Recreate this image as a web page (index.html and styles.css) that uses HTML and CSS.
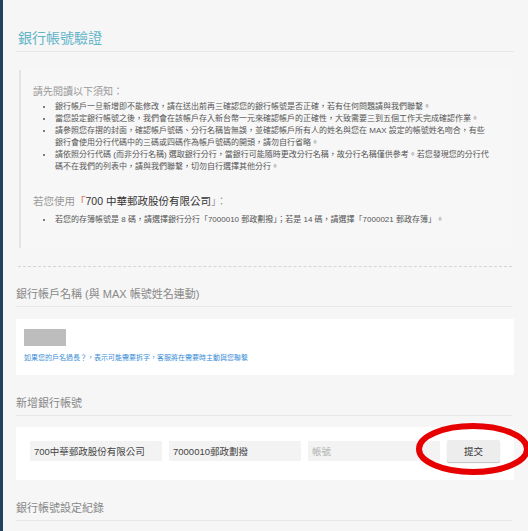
FILE: index.html
```html
<!DOCTYPE html>
<html lang="zh-Hant">
<head>
  <meta charset="UTF-8">
  <meta name="viewport" content="width=device-width, initial-scale=1.0">
  <title>銀行帳號驗證</title>
  <link rel="stylesheet" href="styles.css">
</head>
<body>
  <div class="page">
    <h1 class="page-title">銀行帳號驗證</h1>

    <div class="notice">
      <p class="notice-head">請先閱讀以下須知：</p>
      <ul class="notice-list">
        <li>銀行帳戶一旦新增即不能修改，請在送出前再三確認您的銀行帳號是否正確，若有任何問題請與我們聯繫。</li>
        <li>當您設定銀行帳號之後，我們會在該帳戶存入新台幣一元來確認帳戶的正確性，大致需要三到五個工作天完成確認作業。</li>
        <li>請參照您存摺的封面，確認帳戶號碼、分行名稱皆無誤，並確認帳戶所有人的姓名與您在 MAX 設定的帳號姓名吻合，有些<br>銀行會使用分行代碼中的三碼或四碼作為帳戶號碼的開頭，請勿自行省略。</li>
        <li>請依照分行代碼 (而非分行名稱) 選取銀行分行，當銀行可能隨時更改分行名稱，故分行名稱僅供參考。若您發現您的分行代<br>碼不在我們的列表中，請與我們聯繫，切勿自行選擇其他分行。</li>
      </ul>
      <p class="post-head">若您使用<span class="bracket">「</span><strong>700 中華郵政股份有限公司</strong>」：</p>
      <ul class="notice-list">
        <li>若您的存簿帳號是 8 碼，請選擇銀行分行「7000010 郵政劃撥」；若是 14 碼，請選擇「7000021 郵政存簿」。</li>
      </ul>
    </div>

    <hr class="dashed">

    <h2 class="section-title first">銀行帳戶名稱 (與 MAX 帳號姓名連動)</h2>
    <div class="card name-card">
      <div class="name-box"></div>
      <a class="name-link" href="#">如果您的戶名過長？，表示可能需要拆字，客服將在需要時主動與您聯繫</a>
    </div>

    <h2 class="section-title">新增銀行帳號</h2>
    <div class="card add-card">
      <input class="field" type="text" value="700中華郵政股份有限公司">
      <input class="field" type="text" value="7000010郵政劃撥">
      <input class="field" type="text" placeholder="帳號">
      <button class="submit-btn">提交</button>
    </div>

    <h2 class="section-title">銀行帳號設定紀錄</h2>
  </div>

  <!-- red circle marking the submit button -->
  <svg class="mark" width="116" height="56" viewBox="0 0 116 56">
    <ellipse cx="58" cy="28" rx="54" ry="23" fill="none" stroke="#e60000" stroke-width="6"/>
  </svg>
</body>
</html>
```

FILE: styles.css
```css
body {
  margin: 0;
  background-color: #f6f6f6;
  border-left: 3px solid #24415f;
  min-height: 531px;
  box-sizing: border-box;
  position: relative;
  font-family: "Liberation Sans", "Noto Sans CJK TC", sans-serif;
  color: #555;
  overflow: hidden;
}
.page {
  margin: 0 14px 0 13px;
}
.page-title {
  margin: 0;
  padding: 28px 0 3px 2px;
  font-size: 14px;
  line-height: 20px;
  font-weight: normal;
  color: #62b4c8;
  border-bottom: 1px solid #e6e6e6;
}
.notice {
  margin: 18px 2px 0 3px;
  padding: 15px 0 22px 12px;
  border-left: 2px solid #e4e4e4;
  background-color: #f7f7f7;
}
.notice-head {
  margin: 0 0 2px;
  font-size: 10px;
  line-height: 14px;
  color: #999;
}
.notice-list {
  margin: 0;
  padding-left: 21px;
  font-size: 8px;
  line-height: 12px;
  color: #555;
  white-space: nowrap;
}
.notice-list li {
  padding-left: 1px;
}
.post-head {
  margin: 20px 0 5px;
  font-size: 10.5px;
  line-height: 16px;
  color: #999;
}
.post-head strong {
  font-weight: normal;
  color: #333;
}
.bracket {
  color: #d86a5a;
}
.dashed {
  margin: 18px 2px 0 2px;
  border: none;
  border-top: 1px dashed #d6d6d6;
  height: 0;
}
.section-title {
  margin: 20px 2px 0 0;
  padding-bottom: 4px;
  font-size: 11px;
  line-height: 16px;
  font-weight: normal;
  color: #888;
  border-bottom: 1px solid #e9e9e9;
}
.section-title.first {
  margin-top: 19px;
}
.card {
  background-color: #fff;
  margin-top: 12px;
}
.name-card {
  padding: 10px 8px 12px;
}
.name-box {
  width: 42px;
  height: 17px;
  background-color: #bdbdbd;
}
.name-link {
  display: block;
  margin-top: 7px;
  font-size: 7px;
  line-height: 10px;
  color: #3a8ed6;
  text-decoration: none;
}
.add-card {
  display: flex;
  align-items: center;
  gap: 7px;
  margin-top: 11px;
  padding: 13px 14px 18px;
}
.field {
  flex: 1;
  min-width: 0;
  height: 20px;
  box-sizing: border-box;
  padding: 0 4px;
  border: none;
  background-color: #f3f3f3;
  font-family: "Liberation Sans", "Noto Sans CJK TC", sans-serif;
  font-size: 9.5px;
  color: #444;
}
.field::placeholder {
  color: #b0b0b0;
}
.submit-btn {
  width: 53px;
  height: 22px;
  border: none;
  border-radius: 2px;
  background-color: #ededed;
  box-shadow: 0 1px 1px rgba(0, 0, 0, 0.25);
  font-family: "Liberation Sans", "Noto Sans CJK TC", sans-serif;
  font-size: 9.5px;
  color: #333;
  cursor: pointer;
}
.mark {
  position: absolute;
  left: 412px;
  top: 421px;
}
```
